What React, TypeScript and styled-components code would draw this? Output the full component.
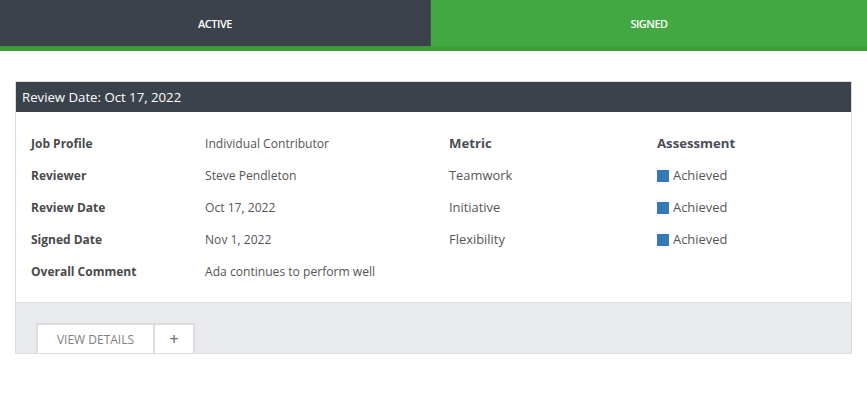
import React from "react";
import styled, { createGlobalStyle } from "styled-components";

const Global = createGlobalStyle`
  html, body { margin: 0; padding: 0; background: #fff; }
  body { font-family: "Open Sans", "Liberation Sans", sans-serif; color: #555; }
`;

const Tabs = styled.div`
  display: grid;
  grid-template-columns: 431px 1fr;
  border-bottom: 5px solid #3e9d3b;
`;

const Tab = styled.div<{ $active?: boolean }>`
  height: 46px;
  display: flex;
  align-items: center;
  justify-content: center;
  background: ${(p) => (p.$active ? "#42a942" : "#3b424c")};
  color: #fff;
  font-size: 11px;
  font-weight: 600;
  letter-spacing: -0.5px;
  text-transform: uppercase;
  box-sizing: border-box;
  ${(p) => (!p.$active ? "border-right: 1px solid #4a505a;" : "")}
`;

const Page = styled.div`
  padding: 30px 15px 0 15px;
`;

const Card = styled.div`
  border: 1px solid #dcdcdc;
  border-top-color: #e0e0e0;
`;

const CardHeader = styled.div`
  background: #3b424c;
  color: #fff;
  height: 30px;
  display: flex;
  align-items: center;
  padding-left: 6px;
  font-size: 13.2px;
`;

const CardBody = styled.div`
  display: grid;
  grid-template-columns: 418px 1fr;
  padding: 15px;
  background: #fff;
`;

const InfoTable = styled.div`
  display: grid;
  grid-template-columns: 174px 244px;
  grid-auto-rows: 32px;
  align-items: center;
`;

const MetricTable = styled.div`
  display: grid;
  grid-template-columns: 208px 1fr;
  grid-auto-rows: 32px;
  align-items: center;
  align-content: start;
`;

const Label = styled.div`
  font-size: 12px;
  font-weight: 700;
  color: #4a4a4a;
`;

const Value = styled.div`
  font-size: 12.1px;
  color: #555;
`;

const ColHead = styled.div`
  font-size: 13.2px;
  font-weight: 700;
  color: #4a4d55;
`;

const Metric = styled.div`
  font-size: 12.9px;
  color: #555;
`;

const Assessment = styled.div`
  display: flex;
  align-items: center;
  gap: 4px;
  font-size: 12.9px;
  color: #555;
`;

const Swatch = styled.span<{ $color: string }>`
  display: inline-block;
  width: 12px;
  height: 12px;
  background: ${(p) => p.$color};
  margin-top: 2px;
`;

const Footer = styled.div`
  background: #e8eaed;
  border-top: 1px solid #dcdcdc;
  padding: 20px 20px 0 20px;
  display: flex;
`;

const FooterButton = styled.div<{ $wide?: boolean }>`
  box-sizing: border-box;
  height: 30px;
  width: ${(p) => (p.$wide ? "119px" : "40px")};
  background: #fff;
  border: 2px solid #dddddd;
  border-bottom: none;
  display: flex;
  align-items: center;
  justify-content: center;
  font-size: 12px;
  color: #808080;
  text-transform: uppercase;
`;

const PlusButton = styled(FooterButton)`
  border-left: none;
  font-size: 16px;
  font-weight: 600;
  color: #777;
`;

const info: [string, string][] = [
  ["Job Profile", "Individual Contributor"],
  ["Reviewer", "Steve Pendleton"],
  ["Review Date", "Oct 17, 2022"],
  ["Signed Date", "Nov 1, 2022"],
  ["Overall Comment", "Ada continues to perform well"],
];

const metrics = ["Teamwork", "Initiative", "Flexibility"];

export default function App() {
  return (
    <>
      <Global />
      <Tabs>
        <Tab>Active</Tab>
        <Tab $active>Signed</Tab>
      </Tabs>
      <Page>
        <Card>
          <CardHeader>Review Date: Oct 17, 2022</CardHeader>
          <CardBody>
            <InfoTable>
              {info.map(([l, v]) => (
                <React.Fragment key={l}>
                  <Label>{l}</Label>
                  <Value>{v}</Value>
                </React.Fragment>
              ))}
            </InfoTable>
            <MetricTable>
              <ColHead>Metric</ColHead>
              <ColHead>Assessment</ColHead>
              {metrics.map((m) => (
                <React.Fragment key={m}>
                  <Metric>{m}</Metric>
                  <Assessment>
                    <Swatch $color="#337ab7" />
                    Achieved
                  </Assessment>
                </React.Fragment>
              ))}
            </MetricTable>
          </CardBody>
          <Footer>
            <FooterButton $wide>View Details</FooterButton>
            <PlusButton>+</PlusButton>
          </Footer>
        </Card>
      </Page>
    </>
  );
}
